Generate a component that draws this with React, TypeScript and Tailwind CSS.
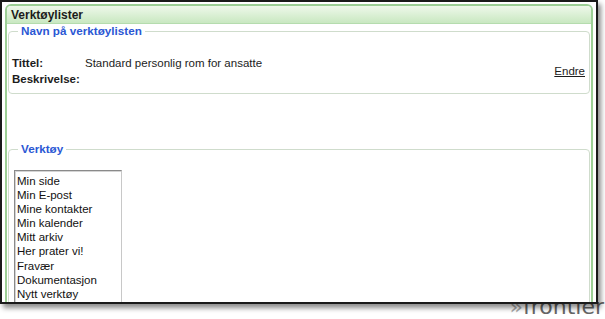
import React from "react";

const items = [
  "Min side",
  "Min E-post",
  "Mine kontakter",
  "Min kalender",
  "Mitt arkiv",
  "Her prater vi!",
  "Fravær",
  "Dokumentasjon",
  "Nytt verktøy",
];

export default function App() {
  return (
    <div
      className="relative w-[605px] h-[319px] bg-white overflow-hidden"
      style={{ fontFamily: '"Liberation Sans", Arial, sans-serif' }}
    >
      <div
        className="absolute right-[1px] bottom-[1px] text-[22px] leading-[22px] text-[#666]"
        style={{ fontFamily: '"DejaVu Sans", sans-serif' }}
      >
        <span className="text-[#aaa]">»</span>frontier
      </div>
      <div className="relative w-[598px] h-[304px] border-2 border-[#1a1a1a] bg-white overflow-hidden shadow-[3px_4px_5px_rgba(0,0,0,0.45)]">
        <div className="mx-[3px] mt-[2px] h-[320px] rounded-t-[6px] border-2 border-[#9ccf95] bg-white">
          <div className="h-[18px] rounded-t-[4px] bg-gradient-to-b from-[#eef8ea] to-[#c9e8c1] border-b border-[#b5dcae] pl-[4px] text-[12px] font-bold leading-[18px] text-[#1c1c1c]">
            Verktøylister
          </div>
          <div className="px-[1px] pt-0">
            <fieldset className="h-[70px] rounded-[4px] border border-[#cfdccc] px-[3px]">
              <legend className="ml-[6px] px-[3px] text-[11.7px] font-bold leading-[14px] text-[#2b58d4]">
                Navn på verktøylisten
              </legend>
              <div className="mt-[17px] flex items-start text-[11.5px] leading-[16px] text-[#1c1c1c]">
                <div className="w-[73px] font-bold">Tittel:</div>
                <div>Standard personlig rom for ansatte</div>
              </div>
              <div className="flex items-start text-[11.5px] leading-[16px] text-[#1c1c1c]">
                <div className="font-bold">Beskrivelse:</div>
                <div className="ml-auto -mt-[8px] mr-[1px] underline">Endre</div>
              </div>
            </fieldset>
            <fieldset className="mt-[48px] h-[200px] rounded-[4px] border border-[#cfdccc] px-[5px]">
              <legend className="ml-[4px] px-[3px] text-[11.7px] font-bold leading-[14px] text-[#2b58d4]">
                Verktøy
              </legend>
              <div className="mt-[14px] w-[108px] h-[150px] border border-[#8a8a8a] border-r-[#c8c8c8] border-b-[#c8c8c8] bg-white px-[2px] pt-[3px] shadow-[inset_1px_1px_0_#d4d4d4]">
                {items.map((t) => (
                  <div key={t} className="text-[11.5px] leading-[14.1px] text-[#111]">
                    {t}
                  </div>
                ))}
              </div>
            </fieldset>
          </div>
        </div>
      </div>
    </div>
  );
}
